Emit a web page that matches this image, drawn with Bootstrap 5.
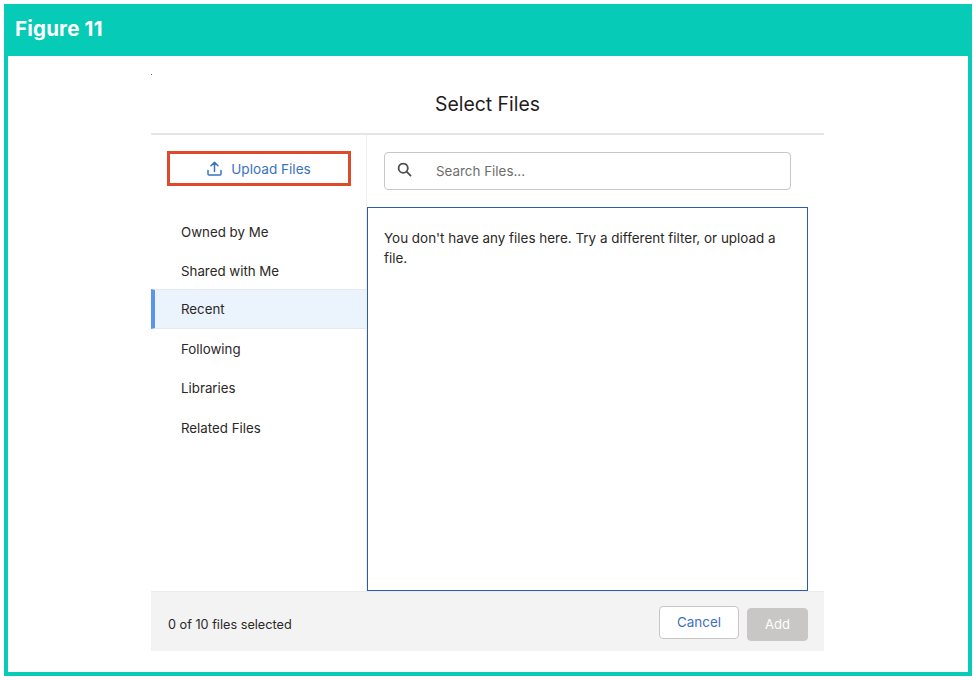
<!DOCTYPE html>
<html lang="en">
<head>
    <meta charset="UTF-8">
    <meta name="viewport" content="width=device-width, initial-scale=1.0">
    <title>Figure 11</title>
    <link href="https://cdn.jsdelivr.net/npm/bootstrap@5.3.3/dist/css/bootstrap.min.css" rel="stylesheet">
    <style>
        html, body { height: 100%; background: #fff; }
        body { padding: 4px; font-family: Inter, "Liberation Sans", sans-serif; font-size: 13.45px; color: #2b2826; }
        .fig-frame { width: 968px; height: 672px; border: 4px solid #05cbb7; border-top: 0; }
        .fig-head { height: 52px; margin: 0 -4px; padding-left: 11px; background: #05cbb7; color: #fff; font-weight: 700; font-size: 20.5px; letter-spacing: .2px; line-height: 50px; }
        .sf-modal { width: 673px; margin: 0 0 0 143px; }
        .sf-title { position: relative; height: 79px; padding-top: 35px; border-bottom: 2px solid #e5e5e5; text-align: center; font-size: 19.4px; line-height: 26px; color: #1f1d1c; }
        .sf-title::before { content: ""; position: absolute; left: 0; top: 18px; width: 1px; height: 1px; background: #555; }
        .sf-main { height: 456px; }
        .sf-side { width: 216px; border-right: 1px solid #efefef; padding-top: 16px; }
        .sf-upload { width: 184px; height: 35px; margin-left: 16px; border: 3px solid #de4a2c; border-radius: 0; color: #3a72c0; font-size: 13.6px; padding: 2px 0 0; gap: 9px; }
        .sf-upload svg { margin-bottom: 2px; }
        .sf-upload:hover { color: #3a72c0; border-color: #de4a2c; }
        .sf-list { margin-top: 25.6px; }
        .sf-item { height: 39.4px; padding: 0 0 0 30px; border: 0; background: transparent; color: #2b2826; font-size: 13.3px; line-height: 40px; }
        .sf-item.active { background: #ebf3fd; color: #2b2826; border-top: 1px solid #e3e9f3; border-bottom: 1px solid #e3e9f3; border-left: 4px solid #5b95e8; padding-left: 26px; line-height: 38px; margin-top: 0; }
        .sf-pane { width: 441px; }
        .sf-search { width: 407px; height: 38px; margin: 17px 0 17px 17px; border: 1px solid #c9c7c5; border-radius: 4px; }
        .sf-search svg { margin: 0 0 4px 12px; flex: none; }
        .sf-search input { border: 0; padding: 0 0 0 24px; font-size: 13.4px; color: #2b2826; box-shadow: none; background: transparent; }
        .sf-search input::placeholder { color: #706e6b; opacity: 1; }
        .sf-results { height: 384px; border: 1px solid #2b5cae; padding: 20px 16px; line-height: 20px; }
        .sf-foot { height: 60px; background: #f3f3f3; padding: 0 16px 0 17px; border-top: 1px solid #ececec; }
        .sf-foot span { padding-top: 6px; font-size: 12.7px; }
        .sf-cancel { width: 80px; height: 33px; padding: 0; margin: 14px 8px 0 0; background: #fff; border: 1px solid #c9c7c5; border-radius: 4px; color: #3a72c0; font-size: 13.4px; }
        .sf-add { width: 61px; height: 33px; padding: 0; margin-top: 16px; background: #c9c7c5; border: 1px solid #c9c7c5; border-radius: 4px; color: #fff; font-size: 13px; }
        .sf-add:disabled { background: #c9c7c5; border-color: #c9c7c5; color: #fff; opacity: 1; }
    </style>
</head>
<body>

<div class="fig-frame">
    <div class="fig-head">Figure 11</div>
    <div class="sf-modal">
        <div class="sf-title">Select Files</div>
        <div class="sf-main d-flex">
            <div class="sf-side">
                <button type="button" class="btn sf-upload d-flex align-items-center justify-content-center">
                    <svg width="15" height="15" viewBox="0 0 15 15" fill="none" stroke="#3a72c0" stroke-width="1.5" stroke-linecap="round" stroke-linejoin="round">
                        <path d="M7.5 10.5V1.5M4 4.8 7.5 1.3 11 4.8"/>
                        <path d="M1 9.5V13a1 1 0 0 0 1 1h11a1 1 0 0 0 1-1V9.5"/>
                    </svg>
                    Upload Files
                </button>
                <div class="list-group list-group-flush sf-list">
                    <a class="list-group-item sf-item" href="#">Owned by Me</a>
                    <a class="list-group-item sf-item" href="#">Shared with Me</a>
                    <a class="list-group-item sf-item active" href="#">Recent</a>
                    <a class="list-group-item sf-item" href="#">Following</a>
                    <a class="list-group-item sf-item" href="#">Libraries</a>
                    <a class="list-group-item sf-item" href="#">Related Files</a>
                </div>
            </div>
            <div class="sf-pane">
                <div class="sf-search d-flex align-items-center">
                    <svg width="15" height="15" viewBox="0 0 15 15" fill="none" stroke="#514f4d" stroke-width="1.8" stroke-linecap="round">
                        <circle cx="6.2" cy="6.2" r="4.6"/>
                        <path d="M9.8 9.8 13.6 13.6"/>
                    </svg>
                    <input type="text" class="form-control" placeholder="Search Files...">
                </div>
                <div class="sf-results">You don't have any files here. Try a different filter, or upload a file.</div>
            </div>
        </div>
        <div class="sf-foot d-flex align-items-center justify-content-between">
            <span>0 of 10 files selected</span>
            <div class="d-flex align-self-start">
                <button type="button" class="btn sf-cancel">Cancel</button>
                <button type="button" class="btn sf-add" disabled>Add</button>
            </div>
        </div>
    </div>
</div>

<script src="https://cdn.jsdelivr.net/npm/bootstrap@5.3.3/dist/js/bootstrap.bundle.min.js"></script>
</body>
</html>
